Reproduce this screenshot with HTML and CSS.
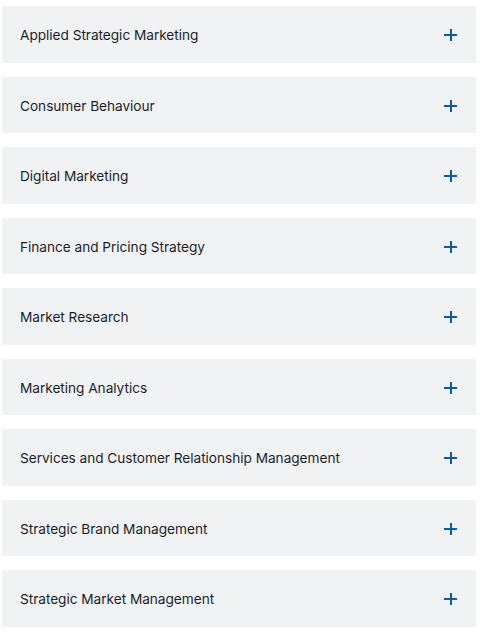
FILE: index.html
```html
<!DOCTYPE html>
<html lang="en">
<head>
<meta charset="utf-8">
<link rel="stylesheet" href="styles.css">
</head>
<body>
<div class="accordion">
  <div class="item"><span class="title">Applied Strategic Marketing</span><span class="plus"></span></div>
  <div class="item"><span class="title">Consumer Behaviour</span><span class="plus"></span></div>
  <div class="item"><span class="title">Digital Marketing</span><span class="plus"></span></div>
  <div class="item"><span class="title">Finance and Pricing Strategy</span><span class="plus"></span></div>
  <div class="item"><span class="title">Market Research</span><span class="plus"></span></div>
  <div class="item"><span class="title">Marketing Analytics</span><span class="plus"></span></div>
  <div class="item"><span class="title">Services and Customer Relationship Management</span><span class="plus"></span></div>
  <div class="item"><span class="title">Strategic Brand Management</span><span class="plus"></span></div>
  <div class="item"><span class="title">Strategic Market Management</span><span class="plus"></span></div>
</div>
</body>
</html>
```

FILE: styles.css
```css
html, body {
  margin: 0;
  padding: 0;
  background: #ffffff;
}
body {
  font-family: Inter, "Liberation Sans", sans-serif;
  color: #1c1f2a;
}
.accordion {
  display: flex;
  flex-direction: column;
  gap: 14px;
  padding: 6px 11px 0 2px;
}
.item {
  display: flex;
  align-items: center;
  justify-content: space-between;
  height: 56.5px;
  background: #f1f2f4;
  padding: 2px 19px 0 18px;
  box-sizing: border-box;
}
.title {
  font-size: 13.7px;
  line-height: 20px;
  letter-spacing: -0.05px;
  font-weight: 380;
}
.plus {
  position: relative;
  width: 13px;
  height: 12px;
  flex: none;
}
.plus::before, .plus::after {
  content: "";
  position: absolute;
  background: #0b5aa6;
}
.plus::before {
  left: 0;
  right: 0;
  top: 5px;
  height: 2px;
}
.plus::after {
  top: 0;
  bottom: 0;
  left: 5.5px;
  width: 2px;
}
```
